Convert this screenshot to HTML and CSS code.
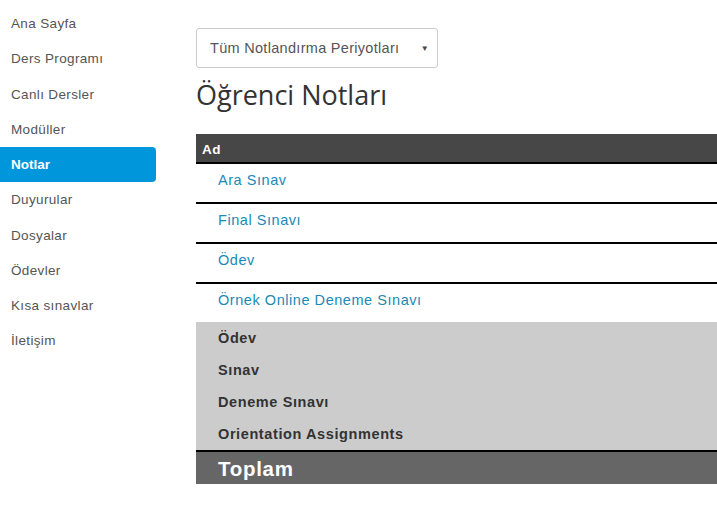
FILE: index.html
```html
<!DOCTYPE html>
<html lang="tr">
<head>
<meta charset="utf-8">
<link rel="stylesheet" href="styles.css">
</head>
<body>
<div class="page">
  <nav class="sidebar">
    <a class="nav-item">Ana Sayfa</a>
    <a class="nav-item">Ders Programı</a>
    <a class="nav-item">Canlı Dersler</a>
    <a class="nav-item">Modüller</a>
    <a class="nav-item active">Notlar</a>
    <a class="nav-item">Duyurular</a>
    <a class="nav-item">Dosyalar</a>
    <a class="nav-item">Ödevler</a>
    <a class="nav-item">Kısa sınavlar</a>
    <a class="nav-item">İletişim</a>
  </nav>
  <main class="content">
    <div class="select">
      <span class="select-text">Tüm Notlandırma Periyotları</span>
      <span class="select-arrow">▼</span>
    </div>
    <h1 class="title">Öğrenci Notları</h1>
    <div class="grades">
      <div class="head-row">Ad</div>
      <div class="item-row"><a class="item-link">Ara Sınav</a></div>
      <div class="item-row"><a class="item-link">Final Sınavı</a></div>
      <div class="item-row"><a class="item-link">Ödev</a></div>
      <div class="item-row"><a class="item-link">Örnek Online Deneme Sınavı</a></div>
      <div class="groups">
        <div class="group-row">Ödev</div>
        <div class="group-row">Sınav</div>
        <div class="group-row">Deneme Sınavı</div>
        <div class="group-row">Orientation Assignments</div>
      </div>
      <div class="total-row">Toplam</div>
    </div>
  </main>
</div>
</body>
</html>
```

FILE: styles.css
```css
html, body {
  margin: 0;
  padding: 0;
  background: #fff;
}

body {
  font-family: "Liberation Sans", Arial, sans-serif;
  color: #333;
}

.page {
  display: flex;
  align-items: flex-start;
}

.sidebar {
  width: 156px;
  flex: none;
  padding-top: 6px;
  display: flex;
  flex-direction: column;
}

.nav-item {
  display: flex;
  align-items: center;
  height: 35.25px;
  padding-left: 11px;
  font-size: 13.5px;
  letter-spacing: 0.35px;
  color: #555;
  border-radius: 0 4px 4px 0;
}

.nav-item.active {
  background: #0096db;
  color: #fff;
  font-weight: bold;
  letter-spacing: 0;
}

.content {
  flex: 1;
  margin-left: 40px;
  padding-top: 28px;
  min-width: 0;
}

.select {
  width: 242px;
  height: 40px;
  box-sizing: border-box;
  border: 1px solid #ccc;
  border-radius: 3px;
  display: flex;
  align-items: center;
  justify-content: space-between;
  padding: 0 8px 0 13px;
  color: #555;
  font-size: 14.5px;
  letter-spacing: 0.3px;
}

.select-arrow {
  font-size: 8px;
  color: #444;
}

.title {
  margin: 8px 0 0;
  height: 38px;
  font-family: "Open Sans", sans-serif;
  font-weight: normal;
  font-size: 27px;
  line-height: 38px;
  color: #333;
}

.grades {
  margin-top: 20px;
}

.head-row {
  height: 28px;
  background: #474747;
  color: #fff;
  font-weight: bold;
  font-size: 13.5px;
  letter-spacing: 0.5px;
  display: flex;
  align-items: center;
  padding-left: 6px;
  padding-top: 2px;
  box-sizing: border-box;
}

.item-row {
  border-top: 2px solid #000;
  height: 40px;
  box-sizing: border-box;
  padding: 7px 0 0 22px;
}

.item-link {
  font-size: 14.5px;
  letter-spacing: 0.55px;
  color: #1a8ab8;
  line-height: 18px;
}

.groups {
  background: #ccc;
  border-bottom: 2px solid #000;
}

.group-row {
  height: 32px;
  display: flex;
  align-items: center;
  padding-left: 22px;
  font-size: 14.5px;
  letter-spacing: 0.6px;
  font-weight: bold;
  color: #333;
  padding-bottom: 1px;
  box-sizing: border-box;
}

.total-row {
  height: 32px;
  background: #666;
  color: #fff;
  font-size: 20.5px;
  letter-spacing: 0.7px;
  font-weight: bold;
  display: flex;
  align-items: center;
  padding-left: 22px;
  padding-top: 1px;
  box-sizing: border-box;
}
```
